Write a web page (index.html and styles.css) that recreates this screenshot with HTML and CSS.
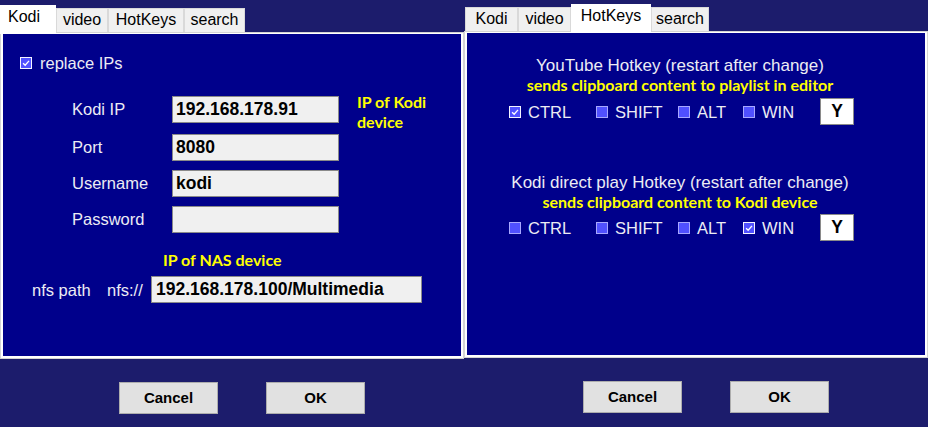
FILE: index.html
```html
<!DOCTYPE html>
<html>
<head>
<meta charset="utf-8">
<link rel="stylesheet" href="styles.css">
</head>
<body>
<div class="screen">
  <div class="dialog dlg-left">
    <div class="tabs">
      <div class="tab active t-kodi-l">Kodi</div>
      <div class="tab t-video-l">video</div>
      <div class="tab t-hot-l">HotKeys</div>
      <div class="tab t-search-l">search</div>
    </div>
    <div class="panel">
      <div class="panel-inner">
        <div class="cb-row">
          <span class="cb checked"><svg viewBox="0 0 12 12"><path d="M2.5 6.2 L5 8.6 L9.6 3.4"/></svg></span>
          <span class="lbl">replace IPs</span>
        </div>
        <div class="form">
          <div class="lbl f-label">Kodi IP</div>
          <div class="input">192.168.178.91</div>
          <div class="note">IP of Kodi<br>device</div>
          <div class="lbl f-label">Port</div>
          <div class="input">8080</div>
          <div class="lbl f-label">Username</div>
          <div class="input">kodi</div>
          <div class="lbl f-label">Password</div>
          <div class="input"></div>
        </div>
        <div class="note nas-note">IP of NAS device</div>
        <div class="nfs-row">
          <span class="lbl nfs-label">nfs path</span>
          <span class="lbl nfs-proto">nfs://</span>
          <div class="input input-wide">192.168.178.100/Multimedia</div>
        </div>
      </div>
    </div>
    <div class="buttons">
      <div class="btn">Cancel</div>
      <div class="btn">OK</div>
    </div>
  </div>

  <div class="dialog dlg-right">
    <div class="tabs">
      <div class="tab t-kodi-r">Kodi</div>
      <div class="tab t-video-r">video</div>
      <div class="tab active t-hot-r">HotKeys</div>
      <div class="tab t-search-r">search</div>
    </div>
    <div class="panel">
      <div class="panel-inner">
        <div class="hk">
          <div class="lbl hk-title first">YouTube Hotkey (restart after change)</div>
          <div class="note hk-note">sends clipboard content to playlist in editor</div>
          <div class="hk-row row1">
            <div class="hk-item"><span class="cb checked"><svg viewBox="0 0 12 12"><path d="M2.5 6.2 L5 8.6 L9.6 3.4"/></svg></span><span class="lbl">CTRL</span></div>
            <div class="hk-item"><span class="cb"></span><span class="lbl">SHIFT</span></div>
            <div class="hk-item"><span class="cb"></span><span class="lbl">ALT</span></div>
            <div class="hk-item"><span class="cb"></span><span class="lbl">WIN</span></div>
            <div class="keybox">Y</div>
          </div>
          <div class="lbl hk-title second">Kodi direct play Hotkey (restart after change)</div>
          <div class="note hk-note">sends clipboard content to Kodi device</div>
          <div class="hk-row row2">
            <div class="hk-item"><span class="cb"></span><span class="lbl">CTRL</span></div>
            <div class="hk-item"><span class="cb"></span><span class="lbl">SHIFT</span></div>
            <div class="hk-item"><span class="cb"></span><span class="lbl">ALT</span></div>
            <div class="hk-item"><span class="cb checked"><svg viewBox="0 0 12 12"><path d="M2.5 6.2 L5 8.6 L9.6 3.4"/></svg></span><span class="lbl">WIN</span></div>
            <div class="keybox">Y</div>
          </div>
        </div>
      </div>
    </div>
    <div class="buttons">
      <div class="btn">Cancel</div>
      <div class="btn">OK</div>
    </div>
  </div>
</div>
</body>
</html>
```
FILE: styles.css
```css
* { box-sizing: border-box; }
html, body { margin: 0; padding: 0; }
body {
  width: 928px;
  height: 427px;
  overflow: hidden;
  background: #1c1c6c;
  font-family: "Liberation Sans", Arial, sans-serif;
}
.screen {
  display: flex;
  width: 928px;
  height: 427px;
}
.dialog {
  width: 464px;
  display: flex;
  flex-direction: column;
}
.dlg-left { padding-top: 5px; }
.dlg-right { padding-top: 4px; }

/* tabs */
.tabs {
  display: flex;
  align-items: flex-end;
  height: 27px;
}
.dlg-right .tabs { padding-left: 1px; }
.tab {
  height: 24px;
  background: #f0f0f0;
  border: 1px solid #d9d9d9;
  border-bottom: none;
  color: #000;
  font-size: 16px;
  line-height: 22px;
  text-align: center;
  white-space: nowrap;
}
.tab.active {
  position: relative;
  z-index: 2;
  height: 29px;
  margin-bottom: -2px;
  background: #ffffff;
  border-color: #ffffff;
  line-height: 22px;
}
.t-kodi-l { width: 56px; padding-right: 8px; }
.t-video-l { width: 52px; }
.t-hot-l { width: 76px; }
.t-search-l { width: 61px; }
.t-kodi-r { width: 53px; }
.t-video-r { width: 53px; }
.t-hot-r { width: 80px; }
.t-search-r { width: 58px; }

/* panel */
.panel {
  height: 327px;
  flex: none;
  border: 1px solid #d4d4d4;
  background: #ffffff;
  padding: 1px 2px 2px 2px;
}
.panel-inner {
  height: 100%;
  background: #00008b;
  display: flow-root;
}
.lbl {
  color: #ececf4;
  font-size: 16.5px;
  line-height: 18px;
  white-space: nowrap;
}
.note {
  color: #ffff00;
  font-family: Lato, "Liberation Sans", sans-serif;
  font-weight: 700;
  font-size: 16px;
  line-height: 20px;
  white-space: nowrap;
}

/* checkbox */
.cb {
  width: 12px;
  height: 12px;
  flex: none;
  border: 1px solid #a8a8ff;
  background: #5050ff;
  display: inline-flex;
}
.cb.checked { border-color: #f4f4ff; }
.cb svg { width: 10px; height: 10px; }
.cb svg path {
  fill: none;
  stroke: #ffffff;
  stroke-width: 1.6;
}

/* left content */
.cb-row {
  display: flex;
  align-items: center;
  gap: 8px;
  height: 18px;
  margin-top: 20px;
  padding-left: 17px;
}
.form {
  margin-top: 24px;
  padding-left: 69px;
  display: grid;
  grid-template-columns: 100px 167px auto;
  grid-template-rows: 38px 36px 36px 27px;
  align-items: start;
}
.f-label {
  grid-column: 1;
  line-height: 27px;
  height: 27px;
}
.form .input { grid-column: 2; }
.input {
  height: 27px;
  border: 1px solid #8a8a8a;
  background: #f0f0f0;
  color: #000;
  font-weight: 700;
  font-size: 17.5px;
  line-height: 25px;
  padding-left: 3px;
  white-space: nowrap;
}
.form .note {
  grid-column: 3;
  grid-row: 1 / span 2;
  margin-top: -4px;
  padding-left: 18px;
}
.nas-note {
  margin-top: 17px;
  padding-left: 160px;
}
.nfs-row {
  display: flex;
  align-items: center;
  margin-top: 6px;
  padding-left: 29px;
}
.nfs-label { width: 75px; }
.nfs-proto { width: 44px; }
.input-wide { width: 271px; padding-left: 4px; }

/* right content */
.hk {
  width: 360px;
  margin-left: 33px;
  text-align: center;
}
.hk-title { font-size: 17px; }
.hk-title.first { margin-top: 24px; }
.hk-title.second { margin-top: 49px; }
.hk-row {
  display: grid;
  grid-template-columns: 87px 82px 65px 77px 34px;
  align-items: center;
  padding-left: 9px;
  text-align: left;
}
.row1 { margin-top: 3px; }
.row2 { margin-top: 2px; }
.hk-item {
  display: flex;
  align-items: center;
  gap: 7px;
}
.keybox {
  width: 34px;
  height: 27px;
  background: #ffffff;
  border: 1px solid #8a8a8a;
  color: #000;
  font-weight: 700;
  font-size: 17.5px;
  line-height: 25px;
  text-align: center;
}

/* buttons */
.buttons {
  display: flex;
  gap: 48px;
  padding-top: 23px;
  padding-left: 119px;
}
.btn {
  width: 99px;
  height: 32px;
  background: #e1e1e1;
  border: 1px solid #adadad;
  color: #000;
  font-weight: 700;
  font-size: 15px;
  line-height: 30px;
  text-align: center;
}
```
